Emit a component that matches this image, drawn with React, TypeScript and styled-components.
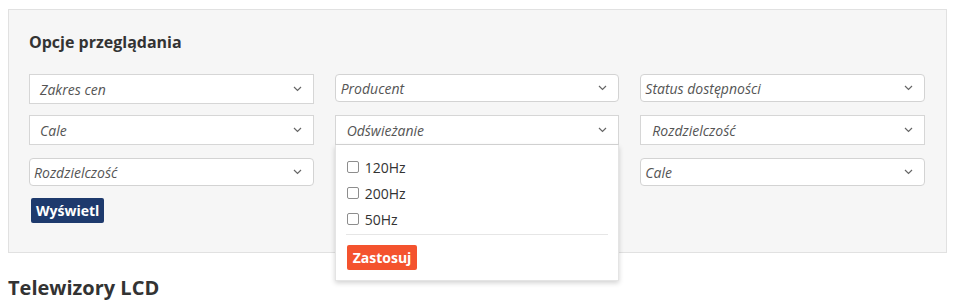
import React from "react";
import styled, { createGlobalStyle, css } from "styled-components";

const Global = createGlobalStyle`
  html, body { margin: 0; padding: 0; background: #fff; }
  body { font-family: "Open Sans", "Liberation Sans", sans-serif; color: #333; }
  * { box-sizing: border-box; }
`;

const Page = styled.div`
  padding: 9px 9px 0 8px;
`;

const Panel = styled.section`
  background: #f6f6f6;
  border: 1px solid #e1e1e1;
  padding: 21px 21px 29px 20px;
`;

const Title = styled.h3`
  margin: 0 0 21px 0;
  font-size: 16px;
  font-weight: 700;
  line-height: 22px;
  color: #333;
`;

const Row = styled.div<{ $top: number }>`
  display: grid;
  grid-template-columns: 1fr 1fr 1fr;
  column-gap: 21px;
  align-items: start;
  margin-top: ${(p) => p.$top}px;
`;

const Cell = styled.div`
  position: relative;
`;

const SelectBox = styled.div<{ $native?: boolean; $pad: number }>`
  display: flex;
  align-items: center;
  justify-content: space-between;
  background: #fff;
  border: 1px solid #d6d6d6;
  font-size: 14px;
  font-style: italic;
  color: #555;
  padding: 0 11px 0 ${(p) => p.$pad}px;
  ${(p) =>
    p.$native
      ? css`
          height: 28px;
          border-radius: 4px;
          border-color: #d3d3d3;
        `
      : css`
          height: 30px;
          border-radius: 0;
        `}
`;

const Chevron = () => (
  <svg width="9" height="6" viewBox="0 0 9 6" fill="none">
    <path d="M1 1l3.5 3.5L8 1" stroke="#666" strokeWidth="1.2" />
  </svg>
);

const Select: React.FC<{ label: string; native?: boolean; pad: number }> = ({
  label,
  native,
  pad,
}) => (
  <SelectBox $native={native} $pad={pad}>
    <span>{label}</span>
    <Chevron />
  </SelectBox>
);

const Menu = styled.div`
  position: absolute;
  left: 0;
  right: 0;
  top: 30px;
  background: #fff;
  border: 1px solid #e4e4e4;
  border-top: none;
  box-shadow: 0 2px 5px rgba(0, 0, 0, 0.18);
  padding: 9px 10px 10px 11px;
  z-index: 5;
`;

const Option = styled.label`
  display: flex;
  align-items: center;
  gap: 6px;
  height: 26px;
  font-size: 14px;
  color: #333;
`;

const Box = styled.span`
  width: 12px;
  height: 12px;
  border: 1px solid #8d8d8d;
  border-radius: 2px;
  background: #fff;
`;

const Divider = styled.hr`
  margin: 2px 0 10px -1px;
  border: none;
  border-top: 1px solid #e6e6e6;
`;

const Button = styled.button<{ $color: string; $pad: number }>`
  display: inline-block;
  border: none;
  border-radius: 2px;
  background: ${(p) => p.$color};
  color: #fff;
  font-family: "Open Sans", "Liberation Sans", sans-serif;
  font-weight: 700;
  font-size: 14px;
  line-height: 25px;
  height: 25px;
  padding: 0 ${(p) => p.$pad}px;
  cursor: pointer;
`;

const Actions = styled.div`
  margin-top: 12px;
  padding-left: 2px;
`;

const Heading = styled.h2`
  margin: 22px 0 0 0;
  font-size: 20px;
  font-weight: 700;
  line-height: 26px;
  color: #333;
`;

export default function App() {
  return (
    <>
      <Global />
      <Page>
        <Panel>
          <Title>Opcje przeglądania</Title>
          <Row $top={0}>
            <Select label="Zakres cen" pad={10} />
            <Select label="Producent" native pad={5} />
            <Select label="Status dostępności" native pad={4} />
          </Row>
          <Row $top={11}>
            <Select label="Cale" pad={10} />
            <Cell>
              <Select label="Odświeżanie" pad={11} />
              <Menu>
                {["120Hz", "200Hz", "50Hz"].map((o) => (
                  <Option key={o}>
                    <Box />
                    {o}
                  </Option>
                ))}
                <Divider />
                <Button $color="#f4532e" $pad={6}>Zastosuj</Button>
              </Menu>
            </Cell>
            <Select label="Rozdzielczość" pad={11} />
          </Row>
          <Row $top={13}>
            <Select label="Rozdzielczość" native pad={4} />
            <Select label="" native pad={4} />
            <Select label="Cale" native pad={4} />
          </Row>
          <Actions>
            <Button $color="#1e3a6d" $pad={5}>Wyświetl</Button>
          </Actions>
        </Panel>
        <Heading>Telewizory LCD</Heading>
      </Page>
    </>
  );
}
